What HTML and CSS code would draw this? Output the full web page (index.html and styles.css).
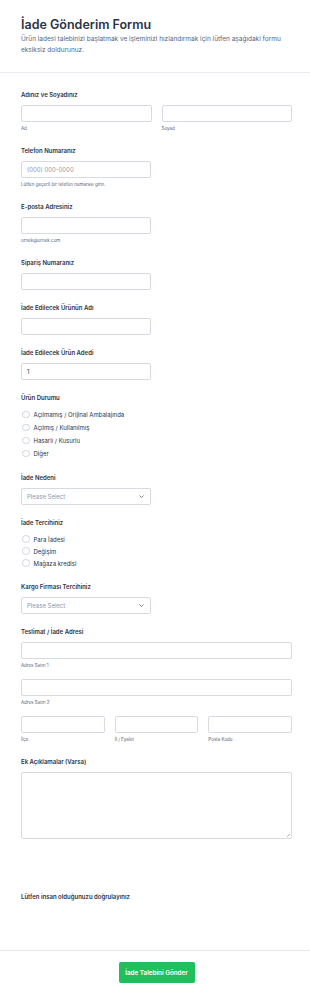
FILE: index.html
```html
<!DOCTYPE html>
<html lang="tr">
<head>
<meta charset="utf-8">
<title>İade Gönderim Formu</title>
<link rel="stylesheet" href="styles.css">
</head>
<body>
<header class="form-header">
  <h1 class="form-title">İade Gönderim Formu</h1>
  <p class="form-subtitle">Ürün iadesi talebinizi başlatmak ve işleminizi hızlandırmak için lütfen aşağıdaki formu eksiksiz doldurunuz.</p>
</header>
<main class="form-body">
  <div class="field">
    <label class="label">Adınız ve Soyadınız</label>
    <div class="row two">
      <div class="col"><div class="input"></div><span class="sub">Ad</span></div>
      <div class="col"><div class="input"></div><span class="sub">Soyad</span></div>
    </div>
  </div>
  <div class="field">
    <label class="label">Telefon Numaranız</label>
    <div class="input half"><span class="ph">(000) 000-0000</span></div>
    <span class="sub">Lütfen geçerli bir telefon numarası girin.</span>
  </div>
  <div class="field">
    <label class="label">E-posta Adresiniz</label>
    <div class="input half"></div>
    <span class="sub">ornek@ornek.com</span>
  </div>
  <div class="field">
    <label class="label">Sipariş Numaranız</label>
    <div class="input half"></div>
  </div>
  <div class="field">
    <label class="label">İade Edilecek Ürünün Adı</label>
    <div class="input half"></div>
  </div>
  <div class="field">
    <label class="label">İade Edilecek Ürün Adedi</label>
    <div class="input half"><span class="val">1</span></div>
  </div>
  <div class="field">
    <label class="label">Ürün Durumu</label>
    <ul class="radios">
      <li class="radio"><span class="circle"></span>Açılmamış / Orijinal Ambalajında</li>
      <li class="radio"><span class="circle"></span>Açılmış / Kullanılmış</li>
      <li class="radio"><span class="circle"></span>Hasarlı / Kusurlu</li>
      <li class="radio"><span class="circle"></span>Diğer</li>
    </ul>
  </div>
  <div class="field">
    <label class="label">İade Nedeni</label>
    <div class="input half select"><span class="ph">Please Select</span>
      <svg class="chev" viewBox="0 0 10 6" width="5" height="3"><path d="M1 1l4 4 4-4" fill="none" stroke="#57647e" stroke-width="1.6"/></svg>
    </div>
  </div>
  <div class="field">
    <label class="label">İade Tercihiniz</label>
    <ul class="radios tight">
      <li class="radio"><span class="circle"></span>Para İadesi</li>
      <li class="radio"><span class="circle"></span>Değişim</li>
      <li class="radio"><span class="circle"></span>Mağaza kredisi</li>
    </ul>
  </div>
  <div class="field">
    <label class="label">Kargo Firması Tercihiniz</label>
    <div class="input half select"><span class="ph">Please Select</span>
      <svg class="chev" viewBox="0 0 10 6" width="5" height="3"><path d="M1 1l4 4 4-4" fill="none" stroke="#57647e" stroke-width="1.6"/></svg>
    </div>
  </div>
  <div class="field">
    <label class="label">Teslimat / İade Adresi</label>
    <div class="addr">
      <div class="col"><div class="input"></div><span class="sub">Adres Satırı 1</span></div>
      <div class="col"><div class="input"></div><span class="sub">Adres Satırı 2</span></div>
      <div class="row three">
        <div class="col"><div class="input"></div><span class="sub">İlçe</span></div>
        <div class="col"><div class="input"></div><span class="sub">İl / Eyalet</span></div>
        <div class="col"><div class="input"></div><span class="sub">Posta Kodu</span></div>
      </div>
    </div>
  </div>
  <div class="field">
    <label class="label">Ek Açıklamalar (Varsa)</label>
    <div class="textarea"><span class="grip"></span></div>
  </div>
  <div class="field captcha">
    <label class="label">Lütfen insan olduğunuzu doğrulayınız</label>
  </div>
</main>
<footer class="form-footer">
  <button class="submit" type="button">İade Talebini Gönder</button>
</footer>
</body>
</html>
```

FILE: styles.css
```css
* { box-sizing: border-box; }
html, body { margin: 0; padding: 0; background: #fff; }
body {
  font-family: Inter, "Noto Sans", sans-serif;
  color: #2c3345;
  width: 310px;
}
.form-header {
  padding: 17px 18px 12px 21px;
  border-bottom: 1px solid #eaebf2;
  height: 73px;
}
.form-title {
  margin: 0;
  font-size: 12.5px;
  line-height: 16px;
  font-weight: 600;
  color: #2c3345;
}
.form-subtitle {
  margin: 1px 0 0;
  font-size: 6.5px;
  line-height: 11px;
  color: #57647e;
}
.form-body {
  padding: 16px 18px 0 21px;
  display: flex;
  flex-direction: column;
  gap: 12px;
}
.field { display: flex; flex-direction: column; }
.label {
  font-size: 6px;
  line-height: 12px;
  font-weight: 600;
  color: #2c3345;
  margin-bottom: 4px;
}
.input {
  height: 17px;
  border: 1px solid #d8dae3;
  border-radius: 2px;
  background: #fff;
  display: flex;
  align-items: center;
  padding: 0 5px;
  font-size: 6px;
  color: #2c3345;
}
.half { width: 130px; }
.ph { color: #8f96a8; }
.val { color: #2c3345; }
.select { justify-content: space-between; }
.chev { display: block; margin-right: 1px; }
.sub {
  display: block;
  margin-top: 3px;
  font-size: 4.5px;
  line-height: 8px;
  color: #57647e;
}
.row { display: flex; gap: 10px; }
.row.two .col { flex: 1 1 0; }
.row.three .col { flex: 1 1 0; }
.col { display: flex; flex-direction: column; }
.addr { display: flex; flex-direction: column; gap: 9px; }
.radios { list-style: none; margin: 0; padding: 0; }
.radio {
  display: flex;
  align-items: center;
  height: 13px;
  font-size: 6px;
  color: #2c3345;
}
.radios.tight .radio { height: 12px; }
.circle {
  width: 7.5px;
  height: 7.5px;
  border: 1px solid #cfd4de;
  border-radius: 50%;
  margin-left: 1px;
  margin-right: 4px;
  flex: none;
}
.textarea {
  height: 67px;
  border: 1px solid #d8dae3;
  border-radius: 2px;
  position: relative;
}
.grip {
  position: absolute;
  right: 1px;
  bottom: 1px;
  width: 3px;
  height: 3px;
  background: linear-gradient(135deg, transparent 45%, #b0b5c2 45%, #b0b5c2 55%, transparent 55%);
}
.captcha { margin-top: 40px; height: 59px; }
.form-footer {
  border-top: 1px solid #eaebf2;
  padding: 11px 0 16px;
  display: flex;
  justify-content: center;
}
.submit {
  font-family: Inter, "Noto Sans", sans-serif;
  background: #1fbf5e;
  color: #fff;
  border: none;
  border-radius: 2px;
  height: 21px;
  width: 76px;
  font-size: 6.3px;
  font-weight: 600;
  padding: 0;
  margin-left: 3px;
}
```
